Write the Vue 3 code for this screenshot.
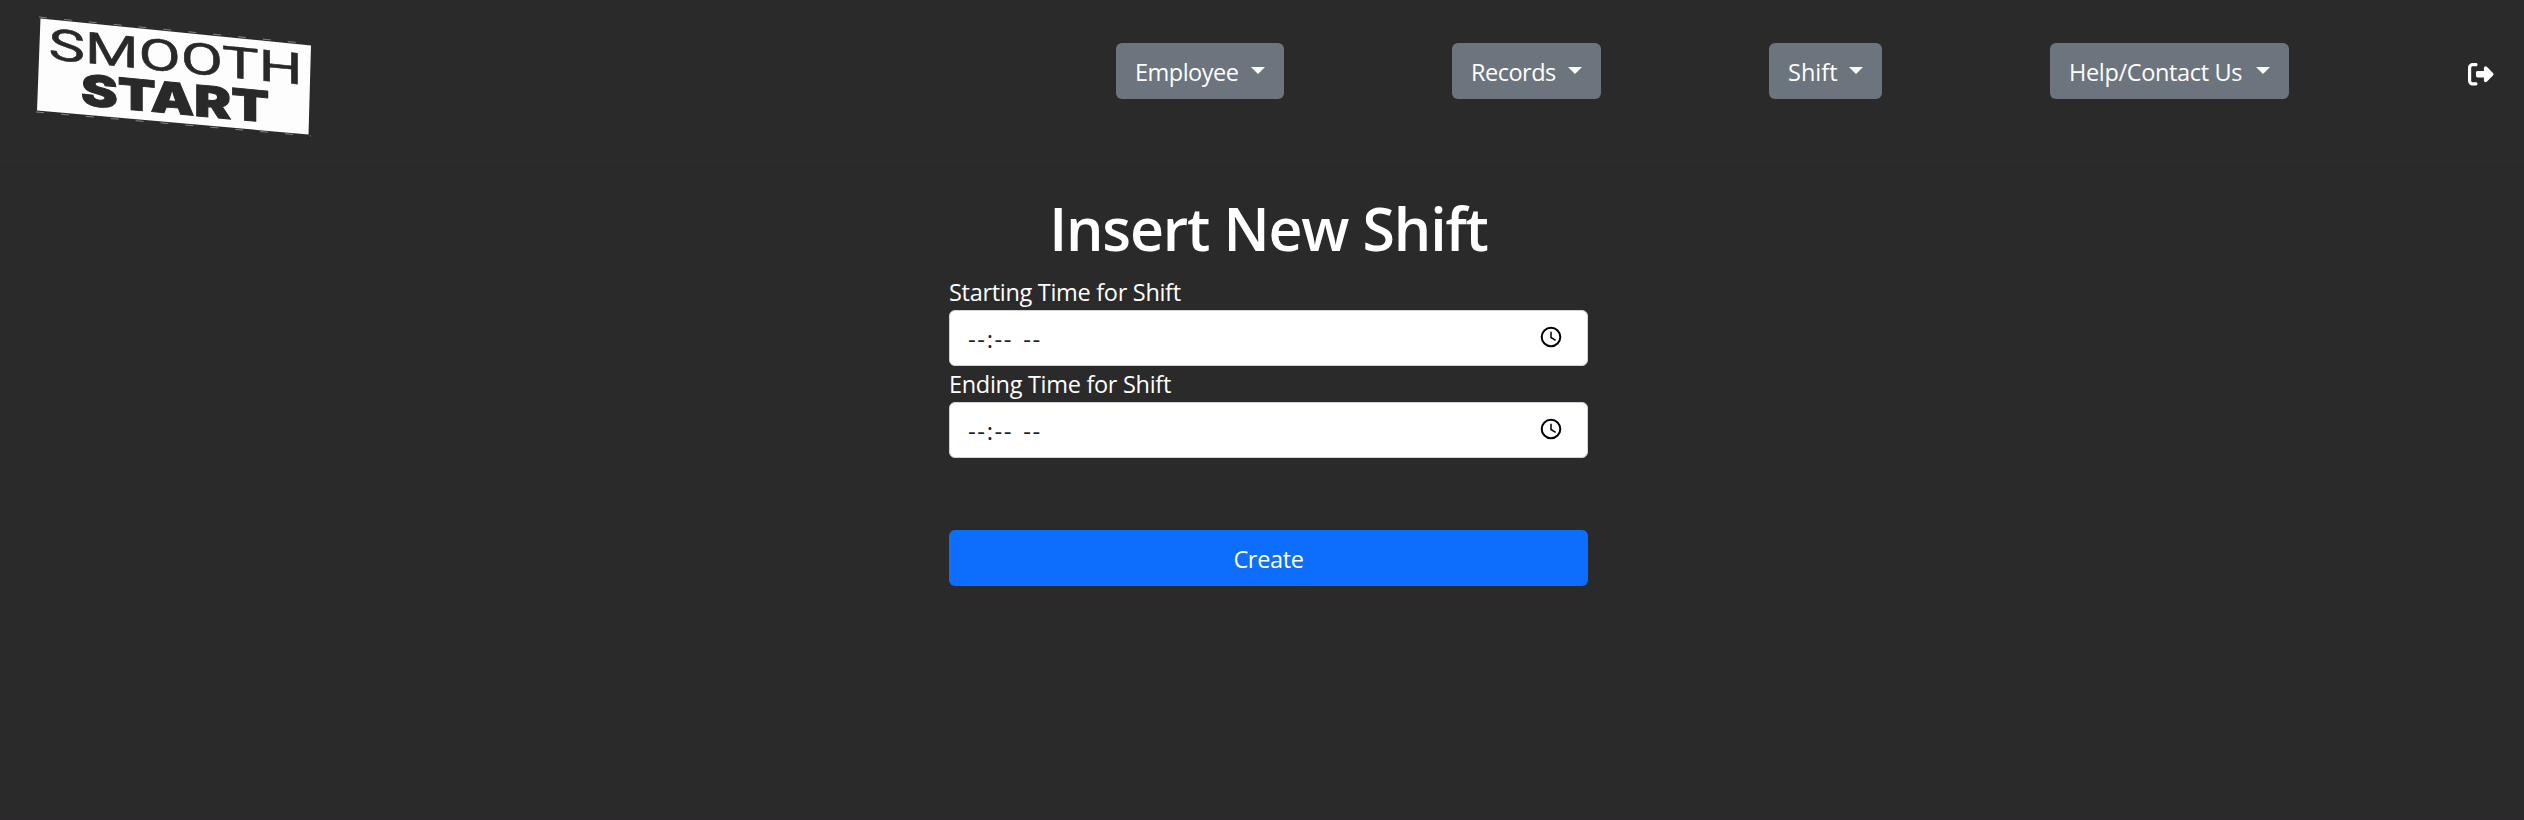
<script setup>
const menus = [
  { label: 'Employee', key: 'employee' },
  { label: 'Records', key: 'records' },
  { label: 'Shift', key: 'shift' },
  { label: 'Help/Contact Us', key: 'help' },
]
const fields = ['Starting Time for Shift', 'Ending Time for Shift']
</script>

<template>
  <div class="page">
    <header class="nav">
      <svg class="logo" width="340" height="150" viewBox="0 0 340 150">
        <polygon points="40.5,18.5 311,45.5 308.5,134.5 37,110.5" fill="#fdfdfd" />
        <path d="M39 17 312 44M36 112 311 136" stroke="#aaa" stroke-width="0.7" stroke-dasharray="8 17" />
        <g fill="#292929" stroke="#292929">
          <text class="smooth" transform="matrix(1 .1 0 1 0 0)" x="48.5" y="54.3" stroke-width="0.5" textLength="254" lengthAdjust="spacingAndGlyphs">SMOOTH</text>
          <text class="start" transform="matrix(1 .093 0 1 0 0)" x="81" y="97.6" stroke-width="1" textLength="188" lengthAdjust="spacingAndGlyphs">START</text>
        </g>
      </svg>
      <nav class="menus">
        <button v-for="m in menus" :key="m.key" :class="['menu', m.key]">
          <span>{{ m.label }}</span><i class="caret"></i>
        </button>
      </nav>
      <svg class="exit" viewBox="0 32 512 448" fill="#fff"><path d="M377.9 105.9L500.7 228.7c7.2 7.2 11.3 17.1 11.3 27.3s-4.1 20.1-11.3 27.3L377.9 406.1c-6.4 6.4-15 9.9-24 9.9c-18.7 0-33.9-15.2-33.9-33.9l0-62.1-128 0c-17.7 0-32-14.3-32-32l0-64c0-17.7 14.3-32 32-32l128 0 0-62.1c0-18.7 15.2-33.9 33.9-33.9c9 0 17.6 3.6 24 9.9zM160 96L96 96c-17.7 0-32 14.3-32 32l0 256c0 17.7 14.3 32 32 32l64 0c17.7 0 32 14.3 32 32s-14.3 32-32 32l-64 0c-53 0-96-43-96-96L0 128C0 75 43 32 96 32l64 0c17.7 0 32 14.3 32 32s-14.3 32-32 32z" /></svg>
    </header>
    <main class="form">
      <h1>Insert New Shift</h1>
      <template v-for="f in fields" :key="f">
        <label>{{ f }}</label>
        <div class="time">
          <span class="blank">--:--</span><span class="blank">--</span>
          <svg class="clock" width="22" height="22" viewBox="0 0 22 22" fill="none" stroke="#000">
            <circle cx="11" cy="11" r="9.3" stroke-width="2" />
            <path d="M11 5.8v5.7l4.6 2.8" stroke-width="1.5" />
          </svg>
        </div>
      </template>
      <button class="create">Create</button>
    </main>
  </div>
</template>

<style>
body { margin: 0; background: #2a2a2a; }
</style>

<style scoped>
.page {
  width: 2524px;
  height: 820px;
  overflow: hidden;
  box-sizing: border-box;
  background: #2a2a2a;
  border-bottom: 1px solid #30272c;
  color: #fff;
  font: 24px/36px "Open Sans", "Noto Sans", sans-serif;
}
.nav {
  height: 167px;
  box-sizing: border-box;
  border-bottom: 1px solid #272727;
  display: flex;
  align-items: flex-start;
}
.logo { flex: none; }
.smooth { font: 400 43.5px "Roboto", sans-serif; }
.start { font: 900 43px "Inter", sans-serif; }
.menus { display: flex; margin: 43px 0 0 776px; gap: 168px; }
button {
  height: 56px;
  padding: 0;
  border: 0;
  border-radius: 6px;
  color: #fff;
  font: inherit;
  font-size: 23.5px;
  letter-spacing: -0.35px;
}
.menu {
  display: flex;
  align-items: center;
  justify-content: space-between;
  box-sizing: border-box;
  padding: 2px 19px 0 19px;
  background: #6c757d;
  white-space: nowrap;
}
.employee { width: 168px; letter-spacing: -0.5px; }
.records { width: 149px; letter-spacing: -0.5px; }
.shift { width: 113px; letter-spacing: 0; }
.help { width: 239px; }
.caret {
  border: 7px solid transparent;
  border-top-color: #fff;
  border-bottom: 0;
  margin-top: -4px;
}
.exit { width: 25.5px; height: 22.5px; margin: 63px 0 0 179px; }
.form { width: 639px; margin-left: 949px; display: flex; flex-direction: column; }
h1 {
  margin: 25px 0 0;
  height: 82px;
  font-size: 59px;
  line-height: 72px;
  font-weight: 600;
  letter-spacing: -1.15px;
  text-align: center;
  white-space: nowrap;
}
label { height: 36px; font-size: 23.5px; letter-spacing: -0.3px; }
.time {
  display: flex;
  align-items: center;
  box-sizing: border-box;
  height: 56px;
  padding: 0 25px 0 18px;
  background: #fff;
  border: 1px solid #ced4da;
  border-radius: 6px;
  color: #212529;
}
.blank { letter-spacing: 1.6px; margin: 1px 10px 0 0; }
.clock { margin: -3px 0 0 auto; }
.create { margin-top: 72px; padding-top: 2px; background: #0d6efd; }
</style>
